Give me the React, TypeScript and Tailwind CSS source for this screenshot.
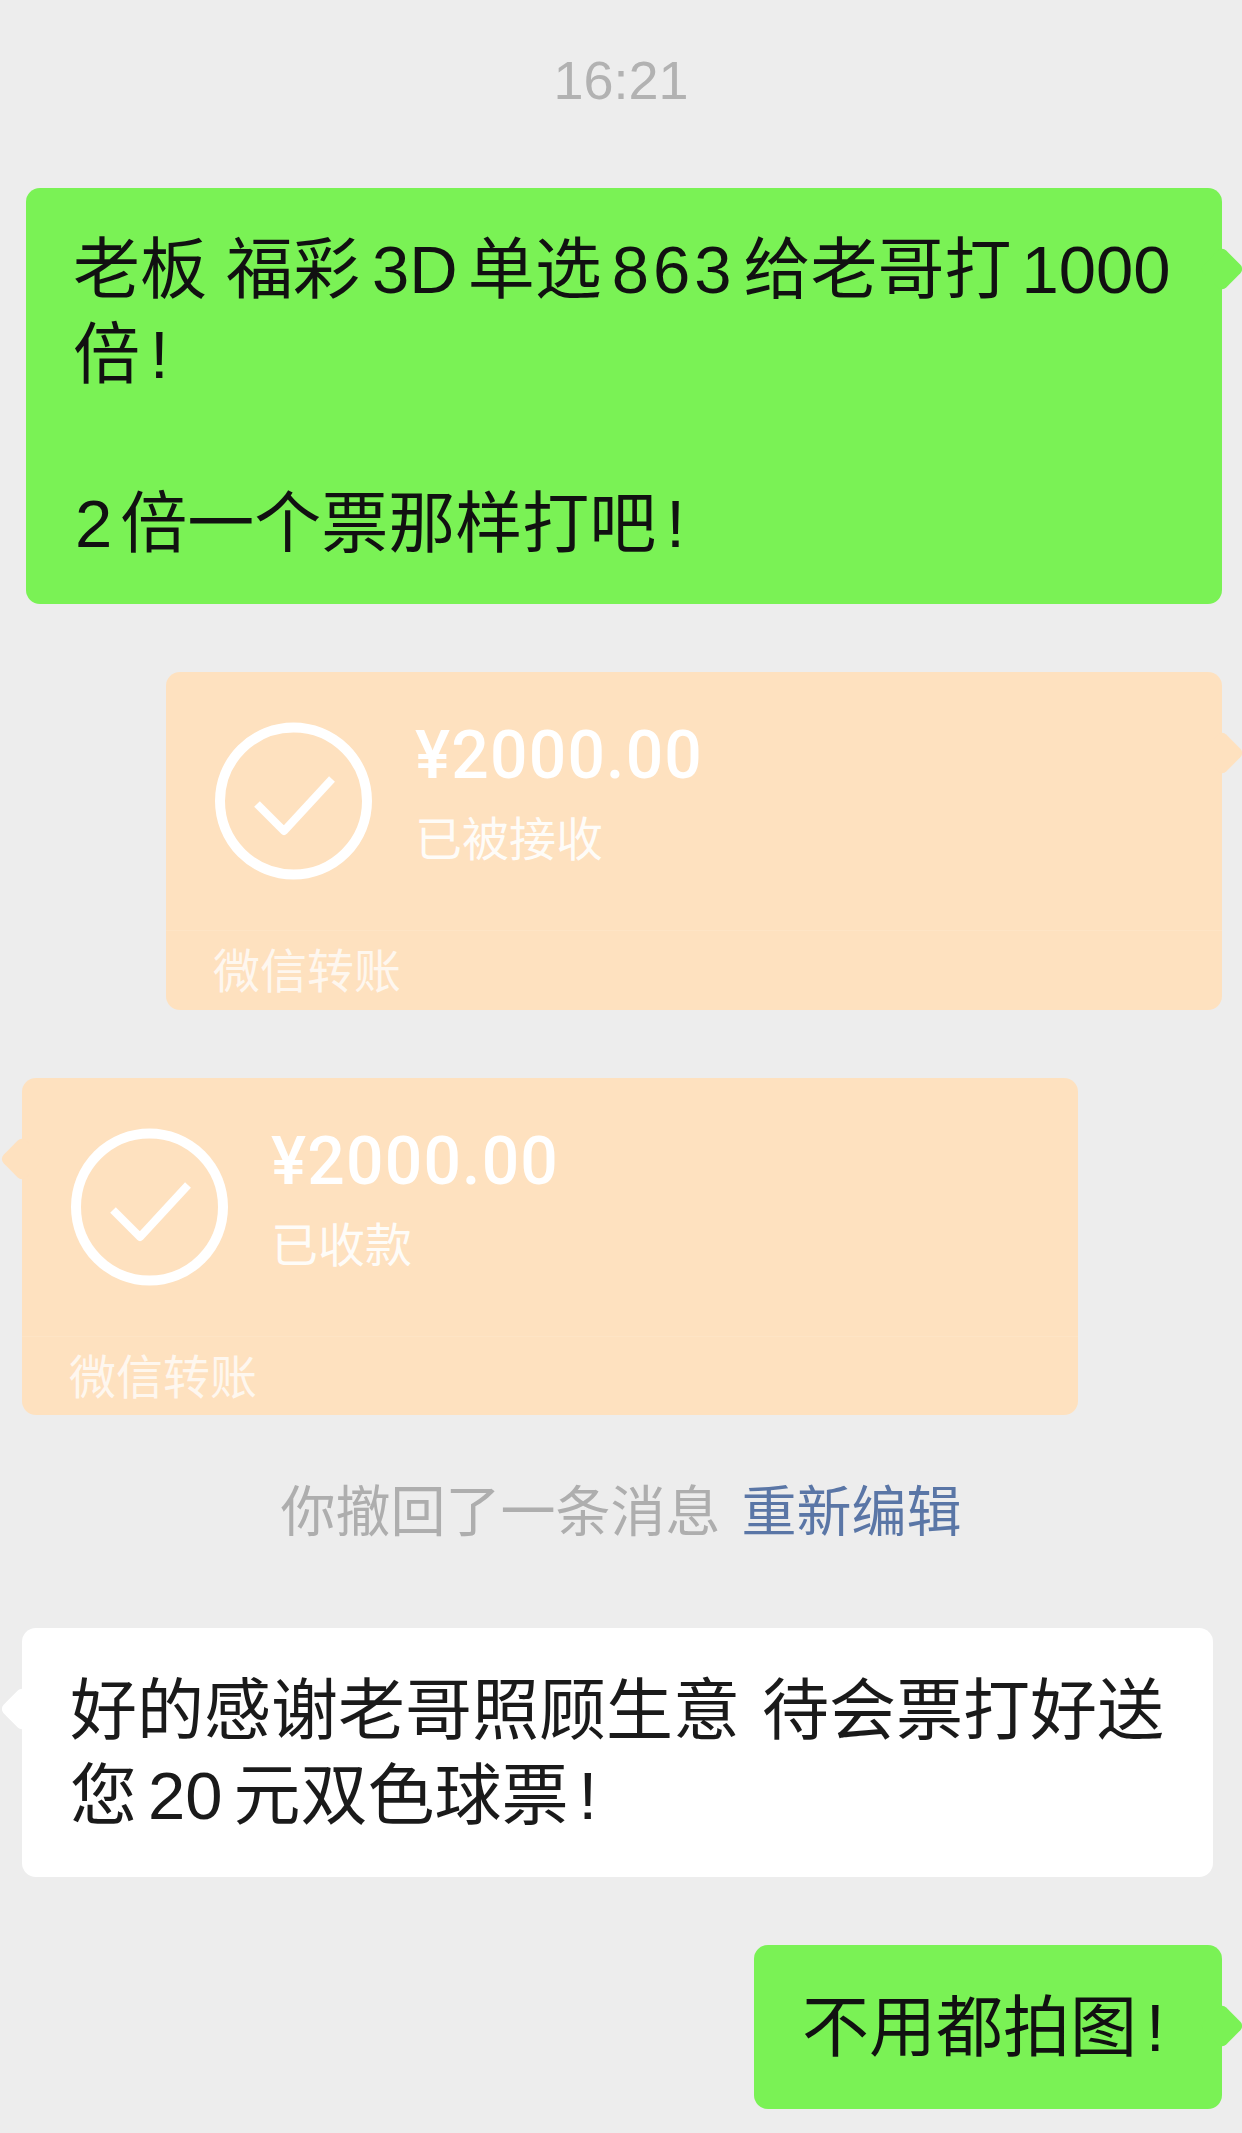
function Tail({ side, color }: { side: "left" | "right"; color: string }) {
  return (
    <span
      className={`absolute top-[65px] h-[32px] w-[32px] rotate-45 rounded-[6px] ${color} ${
        side === "right" ? "right-[-16px]" : "left-[-16px]"
      }`}
    />
  );
}

function Check() {
  return (
    <svg width="158" height="158" viewBox="0 0 158 158" fill="none" className="shrink-0">
      <circle cx="78.5" cy="79" r="73.5" stroke="white" strokeWidth="10" />
      <path d="M42 82 L69 109 L117 57" stroke="white" strokeWidth="8" strokeLinejoin="round" />
    </svg>
  );
}

function Transfer({ status, side, className }: { status: string; side: "left" | "right"; className: string }) {
  return (
    <div className={`relative w-[1056px] rounded-[14px] bg-[#fee1bf] pt-[50px] pl-[49px] ${className}`}>
      <Tail side={side} color="bg-[#fee1bf]" />
      <div className="flex items-start gap-[42px]">
        <Check />
        <div className="-mt-[6px] flex flex-col text-white">
          <div className="font-['Roboto',sans-serif] text-[66px] leading-[80px] font-medium tracking-[1.2px]">¥2000.00</div>
          <div className="mt-[14px] text-[47px] leading-[60px] opacity-90">{status}</div>
        </div>
      </div>
      <div className="mt-[50px] -ml-[49px] border-t border-white/10 pt-[11px] pl-[47px] text-[47px] leading-[60px] text-white/75">微信转账</div>
    </div>
  );
}

export default function App() {
  return (
    <div className="flex h-[2133px] w-[1242px] flex-col overflow-hidden bg-[#ededed] font-['Liberation_Sans','Noto_Sans_CJK_SC',sans-serif] text-[#111]">
      <div className="mt-[50px] h-[60px] text-center text-[54px] leading-[60px] text-[#b2b2b2]">16:21</div>

      <div className="relative mt-[78px] ml-[26px] h-[416px] w-[1196px] rounded-[14px] bg-[#7af255] pt-[40px] pl-[47px] text-[67px] leading-[84.5px] whitespace-nowrap">
        <Tail side="right" color="bg-[#7af255]" />
        <div>
          老板<span className="ml-[19px]">福彩</span>
          <span className="ml-[12px]">3D</span>
          <span className="ml-[10px]">单选</span>
          <span className="ml-[10px] tracking-[4px]">863</span>
          <span className="ml-[8px]">给老哥打</span>
          <span className="ml-[10px]">1000</span>
        </div>
        <div>
          倍<span className="ml-[10px]">!</span>
        </div>
        <div className="h-[84.5px]" />
        <div>
          <span className="ml-[2px]">2</span>
          <span className="ml-[8px]">倍一个票那样打吧</span>
          <span className="ml-[10px]">!</span>
        </div>
      </div>

      <Transfer status="已被接收" side="right" className="mt-[68px] ml-[166px] h-[338px]" />
      <Transfer status="已收款" side="left" className="mt-[68px] ml-[22px] h-[337px]" />

      <div className="mt-[62px] h-[70px] text-center text-[55px] leading-[70px] text-[#aeaeae]">
        你撤回了一条消息<span className="ml-[21px] text-[#5a76a6]">重新编辑</span>
      </div>

      <div className="relative mt-[81px] ml-[22px] h-[249px] w-[1191px] rounded-[14px] bg-white pt-[41px] pl-[48px] text-[67px] leading-[84.5px] whitespace-nowrap text-[#1a1a1a]">
        <Tail side="left" color="bg-white" />
        <div>
          好的感谢老哥照顾生意<span className="ml-[22px]">待会票打好送</span>
        </div>
        <div>
          您<span className="mx-[11px]">20</span>元双色球票<span className="ml-[10px]">!</span>
        </div>
      </div>

      <div className="relative mt-[68px] ml-[754px] h-[164px] w-[468px] rounded-[14px] bg-[#7af255] pt-[40px] pl-[48px] text-[67px] leading-[85px] whitespace-nowrap">
        <Tail side="right" color="bg-[#7af255]" />
        不用都拍图<span className="ml-[9px]">!</span>
      </div>
    </div>
  );
}
